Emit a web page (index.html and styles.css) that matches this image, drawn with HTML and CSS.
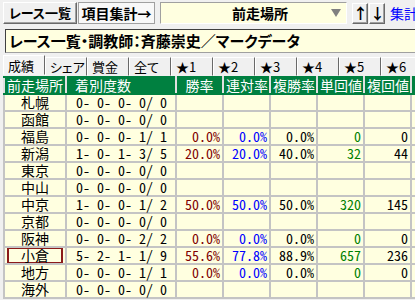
FILE: index.html
```html
<!DOCTYPE html>
<html lang="ja">
<head>
<meta charset="UTF-8" />
<title>前走場所</title>
<link rel="stylesheet" href="styles.css">
</head>
<body>

<div class="toolbar">
  <div class="btn btn-list">レース一覧</div>
  <div class="btn btn-on">項目集計→</div>
  <div class="select">
    <span class="select-text">前走場所</span>
    <span class="select-arrow"></span>
  </div>
  <div class="btn btn-arrow">↑</div>
  <div class="btn btn-arrow">↓</div>
  <span class="link">集計する</span>
</div>

<div class="title">レース一覧・調教師：斉藤崇史／マークデータ</div>

<div class="tabs">
  <span class="tab tab-on">成績</span>
  <span class="tab">シェア</span>
  <span class="tab">賞金</span>
  <span class="tab">全て</span>
  <span class="tab">★1</span>
  <span class="tab">★2</span>
  <span class="tab">★3</span>
  <span class="tab">★4</span>
  <span class="tab">★5</span>
  <span class="tab">★6</span>
</div>

<table class="grid">
  <colgroup>
    <col class="w-place">
    <col class="w-count">
    <col class="w-val">
    <col class="w-val">
    <col class="w-val">
    <col class="w-val">
    <col class="w-val">
    <col class="w-val">
  </colgroup>
  <thead>
    <tr>
      <th>前走場所</th>
      <th class="c-count">着別度数</th>
      <th>勝率</th>
      <th>連対率</th>
      <th>複勝率</th>
      <th>単回値</th>
      <th>複回値</th>
      <th>平均</th>
    </tr>
  </thead>
  <tbody>
    <tr><td class="c-place">札幌</td><td class="num count"> 0- 0- 0- 0/ 0</td><td></td><td></td><td></td><td></td><td></td><td></td></tr>
    <tr><td class="c-place">函館</td><td class="num count"> 0- 0- 0- 0/ 0</td><td></td><td></td><td></td><td></td><td></td><td></td></tr>
    <tr><td class="c-place">福島</td><td class="num count"> 0- 0- 0- 1/ 1</td><td class="num red">0.0%</td><td class="num blue">0.0%</td><td class="num">0.0%</td><td class="num green">0</td><td class="num">0</td><td></td></tr>
    <tr><td class="c-place">新潟</td><td class="num count"> 1- 0- 1- 3/ 5</td><td class="num red">20.0%</td><td class="num blue">20.0%</td><td class="num">40.0%</td><td class="num green">32</td><td class="num">44</td><td></td></tr>
    <tr><td class="c-place">東京</td><td class="num count"> 0- 0- 0- 0/ 0</td><td></td><td></td><td></td><td></td><td></td><td></td></tr>
    <tr><td class="c-place">中山</td><td class="num count"> 0- 0- 0- 0/ 0</td><td></td><td></td><td></td><td></td><td></td><td></td></tr>
    <tr><td class="c-place">中京</td><td class="num count"> 1- 0- 0- 1/ 2</td><td class="num red">50.0%</td><td class="num blue">50.0%</td><td class="num">50.0%</td><td class="num green">320</td><td class="num">145</td><td></td></tr>
    <tr><td class="c-place">京都</td><td class="num count"> 0- 0- 0- 0/ 0</td><td></td><td></td><td></td><td></td><td></td><td></td></tr>
    <tr><td class="c-place">阪神</td><td class="num count"> 0- 0- 0- 2/ 2</td><td class="num red">0.0%</td><td class="num blue">0.0%</td><td class="num">0.0%</td><td class="num green">0</td><td class="num">0</td><td></td></tr>
    <tr><td class="c-place"><span class="cursor">小倉</span></td><td class="num count"> 5- 2- 1- 1/ 9</td><td class="num red">55.6%</td><td class="num blue">77.8%</td><td class="num">88.9%</td><td class="num green">657</td><td class="num">236</td><td></td></tr>
    <tr><td class="c-place">地方</td><td class="num count"> 0- 0- 0- 1/ 1</td><td class="num red">0.0%</td><td class="num blue">0.0%</td><td class="num">0.0%</td><td class="num green">0</td><td class="num">0</td><td></td></tr>
    <tr><td class="c-place">海外</td><td class="num count"> 0- 0- 0- 0/ 0</td><td></td><td></td><td></td><td></td><td></td><td></td></tr>
  </tbody>
</table>

</body>
</html>
```

FILE: styles.css
```css
body {
  margin: 0;
  width: 415px;
  height: 300px;
  overflow: hidden;
  background: #f0f0f0;
  font-family: "Noto Sans CJK JP", sans-serif;
  color: #000;
}

.toolbar {
  display: flex;
  align-items: center;
  height: 22px;
  padding: 2px 0 2px 3px;
  white-space: nowrap;
}

.toolbar > * {
  flex: none;
}

.btn {
  box-sizing: border-box;
  height: 22px;
  font-size: 14px;
  font-weight: bold;
  line-height: 20px;
  text-align: center;
  font-feature-settings: "palt";
  background: #f0f0f0;
  border: 1px solid;
  border-color: #fff #696969 #696969 #fff;
  box-shadow: inset -1px -1px 0 #a0a0a0;
}

.btn-list {
  width: 74px;
  font-size: 13px;
}

.btn-on {
  width: 77px;
  margin-left: 1px;
  background: #f8f8f8;
  border-color: #a0a0a0;
  box-shadow: none;
}

.select {
  display: flex;
  align-items: center;
  box-sizing: border-box;
  width: 187px;
  height: 22px;
  margin-left: 5px;
  background: #ffffe0;
  border: 1px solid;
  border-color: #a0a0a0 #fff #fff #a0a0a0;
}

.select-text {
  flex: 1;
  text-align: center;
  font-size: 14px;
  font-weight: bold;
  padding-left: 28px;
}

.select-arrow {
  width: 0;
  height: 0;
  margin-right: 5px;
  border-left: 5px solid transparent;
  border-right: 5px solid transparent;
  border-top: 8px solid #808080;
}

.btn-arrow {
  width: 16px;
  height: 21px;
  font-size: 15px;
  line-height: 18px;
}

.select + .btn-arrow {
  margin-left: 5px;
}

.btn-arrow + .btn-arrow {
  margin-left: 1px;
}

.link {
  margin-left: 5px;
  font-size: 14px;
  color: #0000ff;
}

.title {
  width: 500px;
  height: 22px;
  margin: 3px 0 0 5px;
  padding-left: 3px;
  background: #ffffe0;
  border: 1px solid;
  border-color: #404040 #d0d0d0 #a0a0a0 #404040;
  font-size: 15px;
  font-weight: bold;
  line-height: 22px;
  font-feature-settings: "palt";
  white-space: nowrap;
}

.tabs {
  display: flex;
  height: 19px;
  margin-top: 4px;
  padding-left: 3px;
  white-space: nowrap;
}

.tab {
  flex: none;
  box-sizing: border-box;
  width: 42px;
  height: 19px;
  padding-left: 4px;
  font-size: 13px;
  line-height: 18px;
  font-feature-settings: "palt";
  background: #f0f0f0;
  border: 1px solid;
  border-color: #fff #696969 transparent #fff;
}

.tab-on {
  height: 20px;
  margin-top: -2px;
  padding-top: 1px;
  background: #f4f4f4;
}

.grid {
  margin-left: 3px;
  border-collapse: collapse;
  table-layout: fixed;
  width: 454px;
  font-size: 14px;
}

.w-place { width: 62px; }
.w-count { width: 110px; }
.w-val { width: 47px; }

.grid th,
.grid td {
  box-sizing: border-box;
  height: 17px;
  padding: 0 2px;
  line-height: 15px;
  white-space: pre;
  border: 2px solid #c4c4c4;
}

.grid th {
  background: #008040;
  color: #fff;
  font-weight: normal;
  text-align: center;
  border-color: #008040 #e0e0e0;
}

.grid td {
  background: #ffffe0;
}

.c-place {
  text-align: center;
}

.grid th.c-count {
  text-align: left;
  padding-left: 8px;
}

.cursor {
  display: block;
  margin: -1px 0;
  border: 2px solid #8b1a1a;
  line-height: 13px;
}

.num {
  font-family: "Noto Sans Mono CJK JP", "Liberation Mono", monospace;
  text-align: right;
}

.grid td.count {
  text-align: left;
  padding-left: 2px;
}

.red { color: #800000; }
.blue { color: #0000ff; }
.green { color: #008000; }
```
